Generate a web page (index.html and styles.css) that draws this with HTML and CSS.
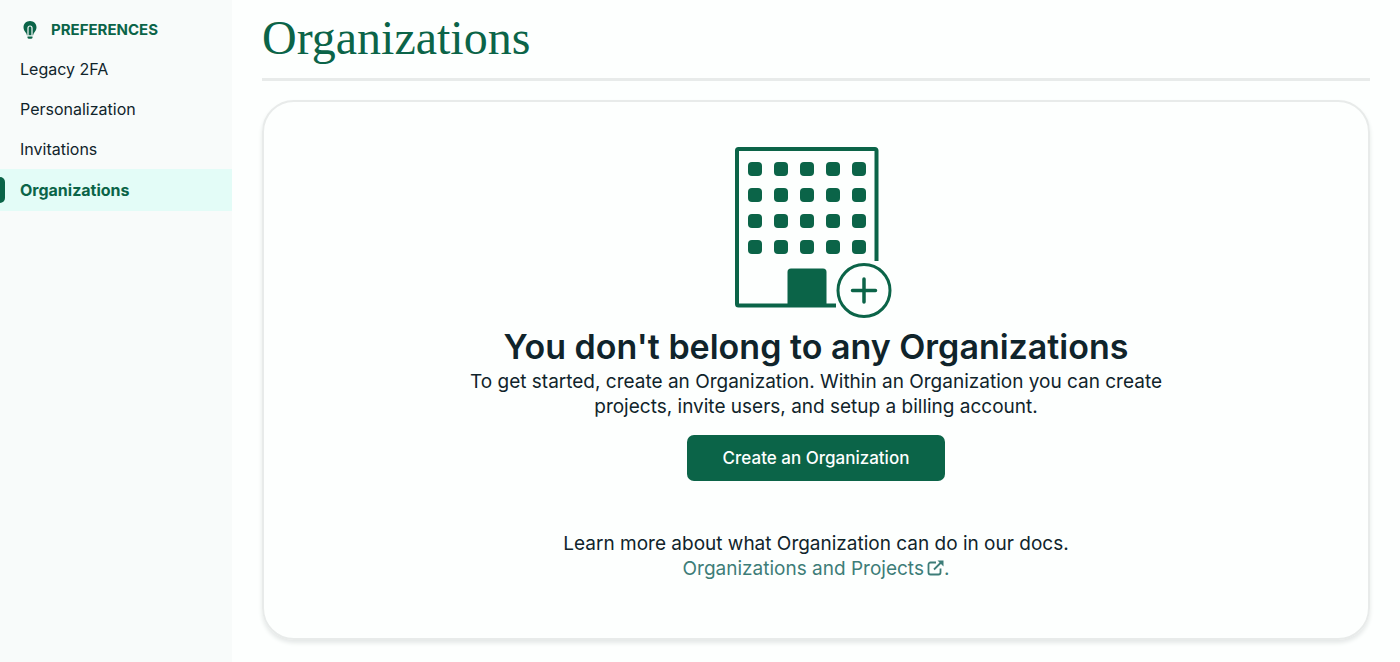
FILE: index.html
```html
<!DOCTYPE html>
<html lang="en">
<head>
<meta charset="utf-8">
<meta name="viewport" content="width=device-width, initial-scale=1">
<title>Organizations</title>
<link rel="stylesheet" href="styles.css">
</head>
<body>
<nav class="sidebar" aria-label="Preferences">
  <h2 class="sidebar-title">
    <svg class="bulb" width="14" height="18" viewBox="0 0 14 18" aria-hidden="true">
      <path d="M7 0C3.200 0 .5 2.800.5 6.300c0 2.500 1.300 4.200 2.500 5.700.5.700.8 1.300.8 2.200h6.400c0-.9.300-1.500.8-2.200 1.200-1.500 2.500-3.200 2.500-5.700C13.500 2.800 10.800 0 7 0z" fill="#0b6448"/>
      <path d="M5 14.500V7a2 2 0 0 1 4 0v7.500" fill="none" stroke="#f8fbfa" stroke-width="1.200"/>
      <path d="M4.500 15.500h5v.7a1.500 1.500 0 0 1-1.500 1.500H6a1.500 1.500 0 0 1-1.500-1.500z" fill="#0b6448"/>
    </svg>
    PREFERENCES
  </h2>
  <ul class="menu">
    <li><a class="menu-link" href="#">Legacy 2FA</a></li>
    <li><a class="menu-link" href="#">Personalization</a></li>
    <li><a class="menu-link" href="#">Invitations</a></li>
    <li><a class="menu-link active" href="#" aria-current="page">Organizations</a></li>
  </ul>
</nav>
<main class="content">
  <h1 class="page-title">Organizations</h1>
  <section class="card">
    <svg class="building" width="170" height="175" viewBox="731 145 170 175" aria-hidden="true">
      <path d="M876.500 261V150.500a1.500 1.500 0 0 0-1.500-1.500H738.500a1.500 1.500 0 0 0-1.500 1.500V304a1.500 1.500 0 0 0 1.500 1.500H836" fill="none" stroke="#0b6448" stroke-width="4"/>
      <path d="M787.500 306v-34a3.500 3.500 0 0 1 3.500-3.500h32a3.500 3.500 0 0 1 3.500 3.500v34z" fill="#0b6448"/>
      <defs>
        <g id="floor" fill="#0b6448">
          <rect x="748" y="0" width="14" height="14" rx="4"/>
          <rect x="774" y="0" width="14" height="14" rx="4"/>
          <rect x="800" y="0" width="14" height="14" rx="4"/>
          <rect x="826" y="0" width="14" height="14" rx="4"/>
          <rect x="852" y="0" width="14" height="14" rx="4"/>
        </g>
      </defs>
      <use href="#floor" y="162"/>
      <use href="#floor" y="188"/>
      <use href="#floor" y="214"/>
      <use href="#floor" y="240"/>
      <circle cx="864" cy="290.500" r="30" fill="#fdfffe"/>
      <circle cx="864" cy="290.500" r="26" fill="none" stroke="#0b6448" stroke-width="3"/>
      <path d="M852.500 290.500h23M864 279v23" stroke="#0b6448" stroke-width="3.500" stroke-linecap="round"/>
    </svg>
    <h2 class="headline">You don't belong to any Organizations</h2>
    <p class="text">To get started, create an Organization. Within an Organization you can create<br>projects, invite users, and setup a billing account.</p>
    <button class="create" type="button">Create an Organization</button>
    <p class="text docs">Learn more about what Organization can do in our docs.<br><a class="docs-link" href="#">Organizations and Projects<svg class="external" width="17" height="16" viewBox="0 0 17 16" aria-hidden="true"><path d="M9 2.500H3.500a2 2 0 0 0-2 2v8a2 2 0 0 0 2 2h8a2 2 0 0 0 2-2V8.500M7 9.500l7-7" fill="none" stroke="currentColor" stroke-width="1.800"/><path d="M10.500.5H16.500V6.500z" fill="currentColor"/></svg>.</a></p>
  </section>
</main>
</body>
</html>
```
FILE: styles.css
```css
* {
  box-sizing: border-box;
}

body {
  margin: 0;
  min-height: 100vh;
  display: grid;
  grid-template-columns: 232px 1fr;
  background: #fdfffe;
  color: #10242b;
  font-family: Inter, "Liberation Sans", sans-serif;
  font-size: 16px;
}

h1, h2, p, ul {
  margin: 0;
  padding: 0;
}

.sidebar {
  background: #f8fbfa;
}

.sidebar-title {
  display: flex;
  align-items: center;
  gap: 14px;
  height: 49px;
  padding: 10px 23px 0;
  color: #0b6448;
  font-size: 15px;
  font-weight: 700;
}

.menu {
  list-style: none;
}

.menu-link {
  display: block;
  padding: 0 20px;
  color: #10242b;
  line-height: 40px;
  text-decoration: none;
}

.menu-link.active {
  position: relative;
  background: #e3fcf7;
  color: #0b6448;
  font-weight: 700;
  line-height: 42px;
}

.menu-link.active::before {
  content: "";
  position: absolute;
  top: 8px;
  bottom: 8px;
  left: 0;
  width: 5px;
  border-radius: 0 5px 5px 0;
  background: #0b6448;
}

.content {
  display: flex;
  flex-direction: column;
  padding: 0 30px 22px;
}

.page-title {
  height: 81px;
  border-bottom: 3px solid #e8ebea;
  color: #0b6448;
  font-family: "Liberation Serif", serif;
  font-size: 48px;
  font-weight: 400;
  line-height: 76px;
}

.card {
  flex: 1;
  display: flex;
  flex-direction: column;
  align-items: center;
  margin-top: 19px;
  padding: 43px 24px;
  border: 2px solid #e8ebea;
  border-radius: 32px;
  box-shadow: 0 3px 4px #e4e8e7;
  text-align: center;
}

.building {
  flex: none;
}

.headline {
  margin-top: 5px;
  font-size: 34px;
  font-weight: 600;
  line-height: 44px;
}

.text {
  font-size: 19px;
  line-height: 25px;
}

.create {
  height: 46px;
  margin-top: 16px;
  padding: 0 36px;
  border: 0;
  border-radius: 7px;
  background: #0b6448;
  color: #fdfffe;
  font: 500 17px Inter, "Liberation Sans", sans-serif;
}

.docs {
  margin-top: 50px;
}

.docs-link {
  color: #3d7d78;
  text-decoration: none;
}

.external {
  margin-left: 3px;
  vertical-align: -1px;
}
```
